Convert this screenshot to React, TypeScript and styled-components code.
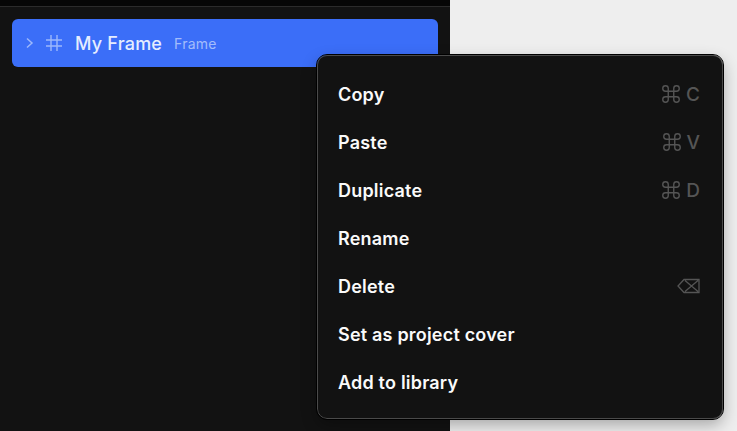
import { createGlobalStyle, styled } from "styled-components"

const GlobalStyle = createGlobalStyle`
    html, body {
        margin: 0;
        padding: 0;
        height: 100%;
        overflow: hidden;
        background: #eeeeee;
    }
    #root {
        height: 100%;
    }
`

const Page = styled.div`
    position: relative;
    width: 737px;
    height: 431px;
    font-family: Inter, "Liberation Sans", sans-serif;
    background: #eeeeee;
`

const Sidebar = styled.aside`
    width: 450px;
    height: 100%;
    background: #121212;
`

const TopBar = styled.div`
    height: 6px;
    background: #060606;
    border-bottom: 1px solid #2b2b2b;
`

const LayerList = styled.div`
    padding: 12px;
`

const LayerRow = styled.div`
    display: flex;
    align-items: center;
    height: 48px;
    padding-left: 13px;
    border-radius: 6px;
    background: #3b6ef8;
`

const Chevron = styled.svg`
    width: 10px;
    height: 12px;
    margin-right: 11px;
`

const FrameIcon = styled.svg`
    width: 16px;
    height: 16px;
    margin-right: 13px;
`

const LayerName = styled.span`
    font-size: 18px;
    font-weight: 500;
    letter-spacing: 0.2px;
    color: #e6edfe;
    margin-right: 12px;
`

const LayerType = styled.span`
    font-size: 14px;
    letter-spacing: 0.2px;
    color: #a3bdfb;
`

const Menu = styled.div`
    position: absolute;
    left: 317px;
    top: 55px;
    box-sizing: border-box;
    width: 406px;
    height: 364px;
    padding: 14px 22px 14px 20px;
    background: #121212;
    border: 1px solid #4a4a4a;
    outline: 1px solid #000000;
    border-radius: 10px;
    box-shadow: 0 6px 16px rgba(0, 0, 0, 0.3);
`

const MenuItem = styled.div`
    display: flex;
    align-items: center;
    justify-content: space-between;
    height: 48px;
    font-size: 18px;
    font-weight: 560;
    letter-spacing: 0.2px;
    color: #fafafa;
`

const Shortcut = styled.span`
    display: flex;
    align-items: center;
    gap: 4px;
    font-size: 19px;
    font-weight: 500;
    letter-spacing: 0;
    color: #555555;
`

const ShortcutIcon = styled.svg`
    width: 23px;
    height: 16px;
`

const CommandIcon = () => (
    <svg width="22" height="22" viewBox="0 0 24 24" fill="none" stroke="#555555" strokeWidth="1.5">
        <path d="M9 6a3 3 0 1 0-3 3h12a3 3 0 1 0-3-3v12a3 3 0 1 0 3-3H6a3 3 0 1 0 3 3z" />
    </svg>
)

const items: { label: string; key?: string; del?: boolean }[] = [
    { label: "Copy", key: "C" },
    { label: "Paste", key: "V" },
    { label: "Duplicate", key: "D" },
    { label: "Rename" },
    { label: "Delete", del: true },
    { label: "Set as project cover" },
    { label: "Add to library" },
]

const App = () => {
    return (
        <Page>
            <GlobalStyle />
            <Sidebar>
                <TopBar />
                <LayerList>
                    <LayerRow>
                        <Chevron viewBox="0 0 10 12" fill="none" stroke="#9db8fb" strokeWidth="1.5">
                            <path d="M2 1.5 7 6 2 10.5" />
                        </Chevron>
                        <FrameIcon viewBox="0 0 16 16" fill="none" stroke="#9db8fb" strokeWidth="1.4">
                            <path d="M5 0v16M11 0v16M0 5h16M0 11h16" />
                        </FrameIcon>
                        <LayerName>My Frame</LayerName>
                        <LayerType>Frame</LayerType>
                    </LayerRow>
                </LayerList>
            </Sidebar>
            <Menu>
                {items.map((item) => (
                    <MenuItem key={item.label}>
                        {item.label}
                        {item.key && (
                            <Shortcut>
                                <CommandIcon />
                                {item.key}
                            </Shortcut>
                        )}
                        {item.del && (
                            <ShortcutIcon viewBox="0 0 23 15" fill="none" stroke="#555555" strokeWidth="1.3">
                                <path d="M22 1H7L1 7.5 7 14h15zM8 2l13 11M21 2 8 13" />
                            </ShortcutIcon>
                        )}
                    </MenuItem>
                ))}
            </Menu>
        </Page>
    )
}

export default App
